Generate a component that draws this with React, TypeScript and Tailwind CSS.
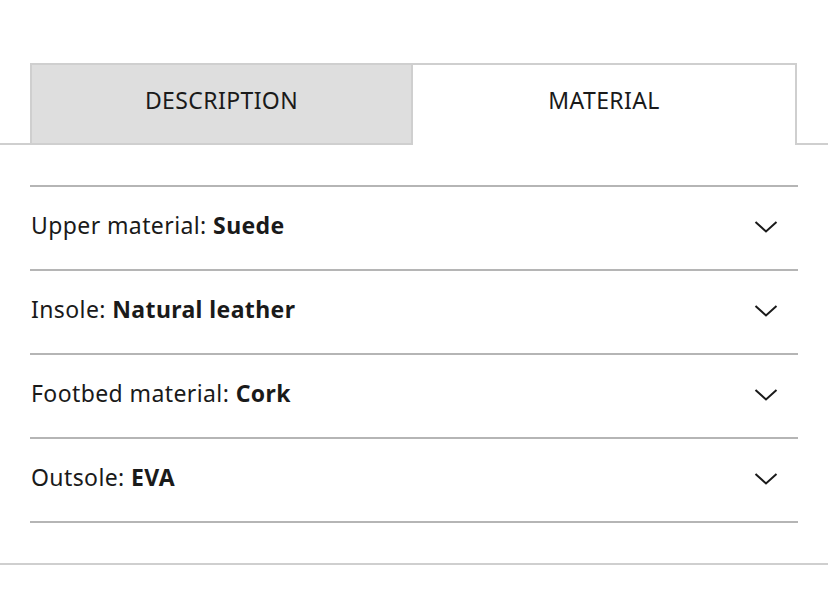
export default function App() {
  const rows = [
    { label: "Upper material:", value: "Suede" },
    { label: "Insole:", value: "Natural leather" },
    { label: "Footbed material:", value: "Cork" },
    { label: "Outsole:", value: "EVA" },
  ];

  return (
    <div className="w-[828px] h-[596px] bg-white text-[#1a1a1a] font-['Noto_Sans',sans-serif] pt-[63px]">
      <div className="flex items-end">
        <div className="w-[30px] border-b-2 border-[#cfcfcf]"></div>
        <button className="w-[383px] h-[82px] pb-[8px] bg-[#dedede] border-2 border-[#cfcfcf] text-[23px] tracking-[0.4px]">
          DESCRIPTION
        </button>
        <button className="w-[384px] h-[82px] pb-[10px] bg-white border-t-2 border-r-2 border-[#cfcfcf] text-[23px] tracking-[0.4px]">
          MATERIAL
        </button>
        <div className="flex-1 border-b-2 border-[#cfcfcf]"></div>
      </div>

      <div className="px-[30px] pt-[40px] pb-[40px] border-b-2 border-[#cfcfcf]">
        <div className="border-b-2 border-[#b5b5b5]">
          {rows.map((row) => (
            <div
              key={row.label}
              className="flex items-center justify-between h-[84px] border-t-2 border-[#b5b5b5] pl-px pr-[20px]"
            >
              <p className="text-[23px] tracking-[0.4px] leading-none mb-[6px]">
                {row.label} <span className="font-bold">{row.value}</span>
              </p>
              <svg width="24" height="12" viewBox="0 0 24 12" fill="none" className="mb-[2px]">
                <path d="M1.5 1 12 10.5 22.5 1" stroke="#1a1a1a" strokeWidth="2" />
              </svg>
            </div>
          ))}
        </div>
      </div>
    </div>
  );
}
